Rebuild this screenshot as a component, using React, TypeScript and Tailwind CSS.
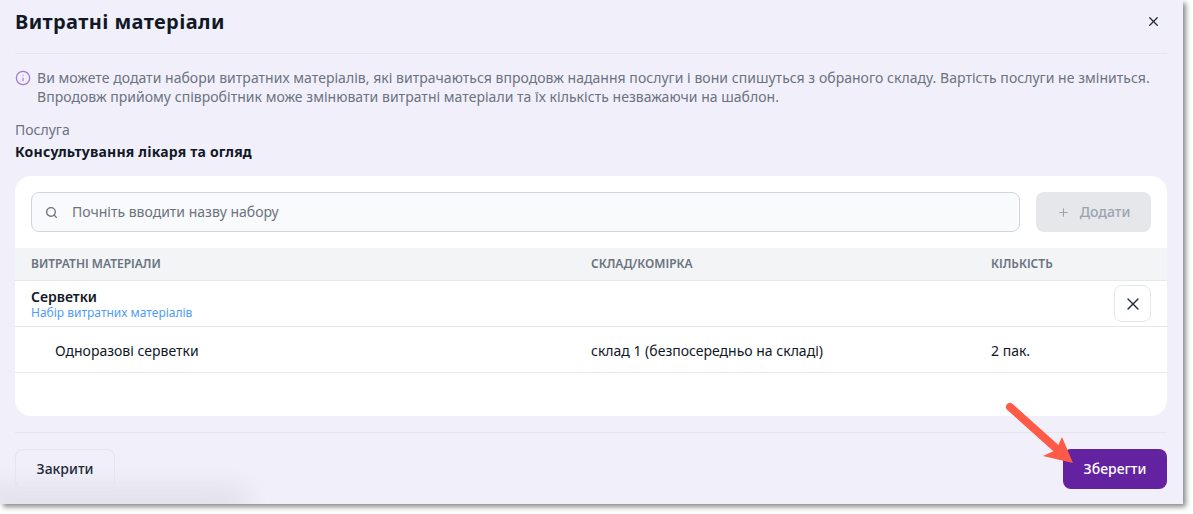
import { Info, Plus, Search, X } from "lucide-react";

const font = { fontFamily: '"Noto Sans", sans-serif' };

export default function App() {
  return (
    <div className="relative h-[514px] w-[1193px] overflow-hidden bg-white" style={font}>
      <div className="relative flex h-[504px] w-[1183px] flex-col overflow-hidden bg-[#f1f0fa] pl-[15px] pr-[16px] shadow-[3px_3px_5px_rgba(0,0,0,0.45)]">
        <div className="pointer-events-none absolute -bottom-[14px] -left-[20px] h-[34px] w-[270px] rounded-full bg-[#d9d8e3] opacity-60 blur-[12px]" />

        <div className="relative flex h-[54px] shrink-0 items-center justify-between border-b border-[#e5e5ee] pb-[10px]">
          <h1 className="text-xl font-bold leading-7 tracking-[0.4px] text-[#111827]">Витратні матеріали</h1>
          <button className="mr-[6px] text-[#1f2937]">
            <X size={15} />
          </button>
        </div>

        <div className="relative mt-[14px] flex gap-[6px] text-sm leading-[19px] tracking-[0.03px] text-[#6b7280]">
          <Info size={16} className="mt-[2px] shrink-0 text-[#a673d8]" strokeWidth={1.75} />
          <p className="whitespace-nowrap">
            Ви можете додати набори витратних матеріалів, які витрачаються впродовж надання послуги і вони спишуться з обраного складу. Вартість послуги не зміниться.
            <br />
            Впродовж прийому співробітник може змінювати витратні матеріали та їх кількість незважаючи на шаблон.
          </p>
        </div>

        <div className="relative mt-[14px] text-sm leading-5 text-[#6b7280]">Послуга</div>
        <div className="relative mt-[2px] text-sm font-bold leading-5 tracking-[0.2px] text-[#111827]">Консультування лікаря та огляд</div>

        <div className="relative mt-[14px] h-[240px] w-[1152px] shrink-0 overflow-hidden rounded-[16px] bg-white">
          <div className="flex gap-4 px-4 pt-4">
            <div className="flex h-10 flex-1 items-center rounded-lg border border-[#d1d5db] bg-[#f9fafb] pl-[13px] text-sm text-[#6b7280]">
              <Search size={13} strokeWidth={2.5} className="text-[#6b7280]" />
              <span className="ml-[14px]">Почніть вводити назву набору</span>
            </div>
            <button className="flex h-10 w-[115px] items-center justify-center gap-[10px] rounded-lg bg-[#e5e7eb] text-sm font-medium text-[#9ca3af]">
              <Plus size={13} />
              Додати
            </button>
          </div>

          <div className="mt-4 grid h-[33px] grid-cols-[560px_400px_1fr] items-center border-b border-[#e5e7eb] bg-[#f3f4f6] pl-4 text-xs font-semibold text-[#6b7280]">
            <div>ВИТРАТНІ МАТЕРІАЛИ</div>
            <div>СКЛАД/КОМІРКА</div>
            <div>КІЛЬКІСТЬ</div>
          </div>

          <div className="flex h-[46px] items-center justify-between border-b border-[#e5e7eb] pl-4 pr-4">
            <div className="pt-[2px]">
              <div className="text-sm font-semibold leading-[16px] text-[#111827]">Серветки</div>
              <div className="text-xs leading-[15px] text-[#4f9cf9]">Набір витратних матеріалів</div>
            </div>
            <button className="flex h-[37px] w-[37px] items-center justify-center rounded-lg border border-[#e5e7eb] bg-white text-[#1f2937]">
              <X size={20} strokeWidth={1.6} />
            </button>
          </div>

          <div className="grid h-[46px] grid-cols-[560px_400px_1fr] items-center border-b border-[#e5e7eb] pl-4 pt-[2px] text-sm text-[#111827]">
            <div className="pl-6">Одноразові серветки</div>
            <div>склад 1 (безпосередньо на складі)</div>
            <div>2 пак.</div>
          </div>
        </div>

        <div className="relative mt-4 flex items-center justify-between border-t border-[#e5e5ee] pt-4">
          <button className="h-10 w-[100px] rounded-lg border border-[#e5e5ee] text-sm font-medium text-[#1f2937]">Закрити</button>
          <button className="h-10 w-[104px] rounded-lg bg-[#63229f] text-sm font-medium text-white">Зберегти</button>
        </div>
      </div>

      {/* arrow pointing at the save button */}
      <svg className="absolute left-[1000px] top-[398px]" width="80" height="70" viewBox="0 0 80 70">
        <path d="M10 9 L58 52" stroke="#ff5a47" strokeWidth="8" strokeLinecap="round" fill="none" />
        <path d="M73 65 L43 58 L56 52 L62 39 Z" fill="#ff5a47" />
      </svg>
    </div>
  );
}
